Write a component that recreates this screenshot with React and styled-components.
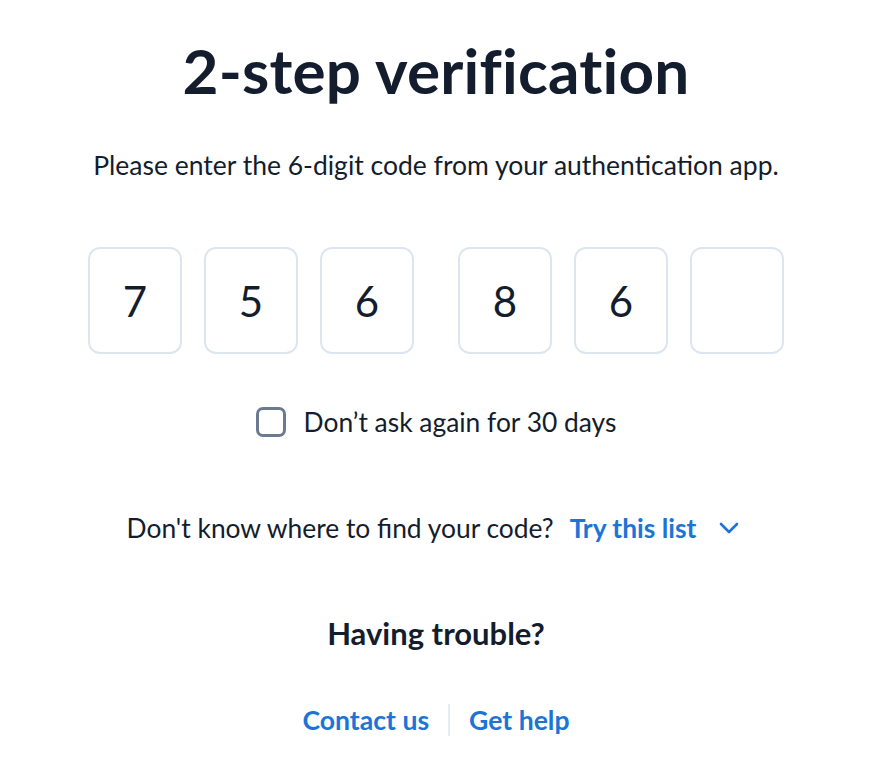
import React from 'react';
import styled, {createGlobalStyle} from 'styled-components';

const GlobalStyle = createGlobalStyle`
    body {
        margin: 0;
        background: #ffffff;
        font-family: Lato, "Noto Sans", sans-serif;
        color: #131d2d;
    }
`

const Page = styled.div`
    width: 872px;
    height: 782px;
    display: flex;
    flex-direction: column;
    align-items: center;
`

const Title = styled.h1`
    margin: 35px 0 0;
    font-size: 62px;
    line-height: 70px;
    font-weight: 700;
    letter-spacing: 0.2px;
`

const Subtitle = styled.p`
    margin: 45px 0 0;
    font-size: 26.5px;
    line-height: 30px;
`

const CodeRow = styled.div`
    margin-top: 67px;
    display: flex;
    gap: 44px;
`

const CodeGroup = styled.div`
    display: flex;
    gap: 22px;
`

const DigitBox = styled.div`
    width: 94px;
    height: 107px;
    box-sizing: border-box;
    border: 2px solid #dde6ef;
    border-radius: 12px;
    display: flex;
    align-items: center;
    justify-content: center;
    font-size: 42px;
    font-weight: 400;
`

const CheckRow = styled.label`
    margin-top: 53px;
    display: flex;
    align-items: center;
    gap: 18px;
    font-size: 26.4px;
    line-height: 30px;
`

const CheckBox = styled.span`
    width: 30px;
    height: 30px;
    box-sizing: border-box;
    border: 3px solid #6b7a93;
    border-radius: 7px;
`

const HintRow = styled.div`
    margin-top: 76px;
    margin-right: 6px;
    display: flex;
    align-items: center;
    font-size: 26.4px;
    line-height: 30px;
`

const LinkText = styled.a`
    color: #1d74d7;
    font-weight: 700;
    text-decoration: none;
    margin-left: ${props => props.gap || 0}px;
`

const Chevron = styled.svg`
    margin-left: 23px;
`

const Trouble = styled.h2`
    margin: 73px 0 0;
    font-size: 31px;
    line-height: 34px;
    font-weight: 700;
`

const LinksRow = styled.div`
    margin-top: 54px;
    display: flex;
    align-items: center;
    font-size: 26.6px;
    line-height: 30px;
`

const Divider = styled.span`
    width: 2px;
    height: 32px;
    background: #e4ebf3;
    margin: 0 19px;
`

const code = [['7', '5', '6'], ['8', '6', '']];

export default function App() {
    return (
        <Page>
            <GlobalStyle />
            <Title>2-step verification</Title>
            <Subtitle>Please enter the 6-digit code from your authentication app.</Subtitle>
            <CodeRow>
                {code.map((group, i) => (
                    <CodeGroup key={i}>
                        {group.map((d, j) => <DigitBox key={j}>{d}</DigitBox>)}
                    </CodeGroup>
                ))}
            </CodeRow>
            <CheckRow>
                <CheckBox />
                Don’t ask again for 30 days
            </CheckRow>
            <HintRow>
                Don't know where to find your code?
                <LinkText gap={16}>Try this list</LinkText>
                <Chevron width="20" height="12" viewBox="0 0 20 12">
                    <path d="M2 2l8 8 8-8" fill="none" stroke="#1d74d7" strokeWidth="2.6" strokeLinecap="round" strokeLinejoin="round" />
                </Chevron>
            </HintRow>
            <Trouble>Having trouble?</Trouble>
            <LinksRow>
                <LinkText>Contact us</LinkText>
                <Divider />
                <LinkText>Get help</LinkText>
            </LinksRow>
        </Page>
    );
}
